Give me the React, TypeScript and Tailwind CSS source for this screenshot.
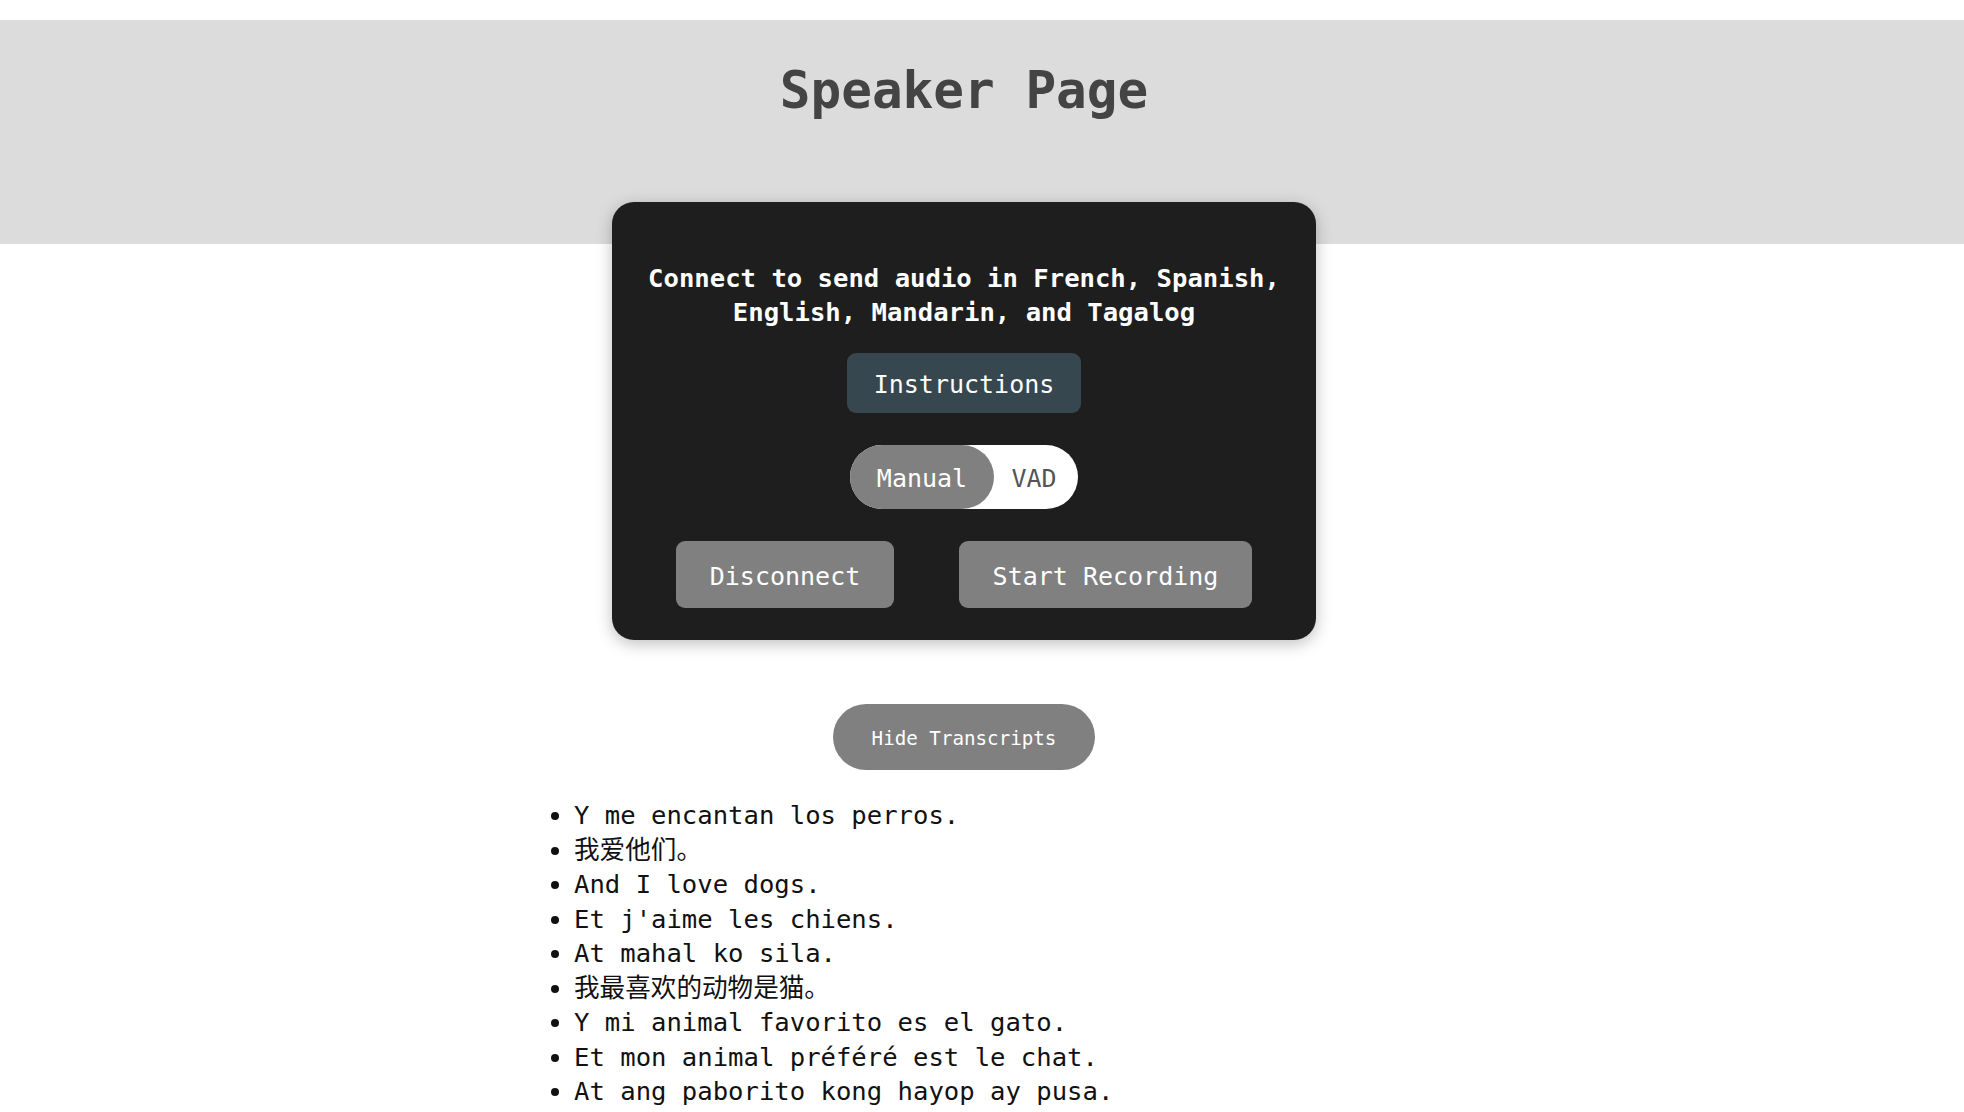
import React, { useState } from 'react';

const transcripts = [
  'Y me encantan los perros.',
  '我爱他们。',
  'And I love dogs.',
  "Et j'aime les chiens.",
  'At mahal ko sila.',
  '我最喜欢的动物是猫。',
  'Y mi animal favorito es el gato.',
  'Et mon animal préféré est le chat.',
  'At ang paborito kong hayop ay pusa.',
];

const mono = "font-['DejaVu_Sans_Mono','Liberation_Mono','Noto_Sans_CJK_SC',monospace]";

export default function App() {
  const [mode, setMode] = useState<'manual' | 'vad'>('manual');
  const [showTranscripts, setShowTranscripts] = useState(true);

  return (
    <div className={`min-h-screen bg-white pt-5 ${mono}`}>
      <header className="h-[224px] bg-[#dcdcdc] pr-9 pt-[39px]">
        <h1 className="text-center text-[51px] font-bold leading-[64px] text-[#444444]">Speaker Page</h1>
      </header>

      <main className="-mt-[42px] flex flex-col items-center pr-9">
        <div className="flex w-[704px] flex-col items-center rounded-[22px] bg-[#1e1e1e] px-6 pb-8 pt-[59px] shadow-[0_4px_16px_rgba(0,0,0,0.25)]">
          <h2 className="text-center text-[25.6px] font-bold leading-[34px] text-white">
            Connect to send audio in French, Spanish,
            <br />
            English, Mandarin, and Tagalog
          </h2>

          <button className="mt-[24px] h-[60px] rounded-[9px] bg-[#37474f] px-[27px] pt-[3px] text-[25px] text-white">
            Instructions
          </button>

          <div className="mt-8 flex h-16 w-[228px] rounded-full bg-white">
            <button
              onClick={() => setMode('manual')}
              className={`h-full w-[144px] rounded-full pt-[3px] text-[25px] ${mode === 'manual' ? 'bg-[#808080] text-white' : 'text-[#555555]'}`}
            >
              Manual
            </button>
            <button
              onClick={() => setMode('vad')}
              className={`h-full flex-1 rounded-full pr-1 pt-[3px] text-[25px] ${mode === 'vad' ? 'bg-[#808080] text-white' : 'text-[#555555]'}`}
            >
              VAD
            </button>
          </div>

          <div className="mt-8 flex gap-[65px]">
            <button className="h-[67px] w-[218px] rounded-[9px] bg-[#808080] pt-[5px] text-[25px] text-white">Disconnect</button>
            <button className="h-[67px] w-[293px] rounded-[9px] bg-[#808080] pt-[5px] text-[25px] text-white">Start Recording</button>
          </div>
        </div>

        <button
          onClick={() => setShowTranscripts(!showTranscripts)}
          className="mt-16 h-[66px] w-[262px] rounded-full bg-[#808080] pt-[4px] text-[19.2px] text-white"
        >
          {showTranscripts ? 'Hide Transcripts' : 'Show Transcripts'}
        </button>

        {showTranscripts && (
          <div className="mt-[28px] w-[860px]">
            <ul className="list-disc pl-10 text-[25.6px] leading-[34.5px] text-[#111111]">
              {transcripts.map((t, i) => (
                <li key={i}>{t}</li>
              ))}
            </ul>
          </div>
        )}
      </main>
    </div>
  );
}
